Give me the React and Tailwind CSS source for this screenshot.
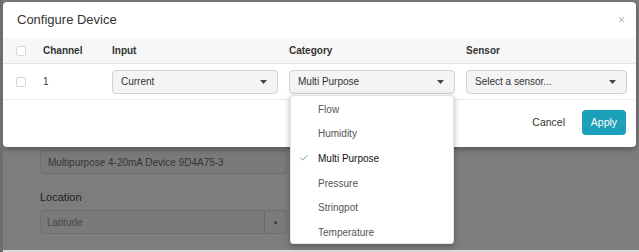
import { Check } from 'lucide-react'

const options = ['Flow', 'Humidity', 'Multi Purpose', 'Pressure', 'Stringpot', 'Temperature']

function Caret() {
  return (
    <svg width="7" height="4" viewBox="0 0 7 4" className="shrink-0">
      <path d="M0 0h7L3.5 4z" fill="#444" />
    </svg>
  )
}

function Select({ label, muted, className }) {
  return (
    <div className={`h-[24px] flex items-center justify-between rounded-[4px] border border-[#d2d2d2] bg-[#f4f4f5] pl-[8px] pr-[10px] text-[10px] ${muted ? 'text-[#555]' : 'text-[#333]'} ${className}`}>
      <span>{label}</span>
      <Caret />
    </div>
  )
}

function Box() {
  return <div className="w-[10px] h-[10px] rounded-[2px] border border-[#d6d6d6] bg-white" />
}

export default function App() {
  return (
    <div className="relative w-[639px] h-[252px] overflow-hidden bg-[#7d7d7d] border-l-[3px] border-[#6e6e6e] font-['Liberation_Sans',Arial,sans-serif]">
      {/* dimmed page behind the modal */}
      <div className="pl-[37px] pt-[150px] w-[284px]">
        <div className="h-[24px] flex items-center rounded-[4px] border border-[#6f6f6f] bg-[#7a7a7a] px-[7px] text-[10px] text-[#363636]">
          Multipurpose 4-20mA Device 9D4A75-3
        </div>
        <div className="mt-[17px] text-[11px] leading-[12px] text-[#222]">Location</div>
        <div className="mt-[7px] h-[24px] flex rounded-[4px] border border-[#6f6f6f] bg-[#7a7a7a] text-[10px] text-[#474747]">
          <div className="flex-1 flex items-center px-[6px]">Latitude</div>
          <div className="w-[22px] border-l border-[#6a6a6a] flex items-center justify-center">
            <div className="w-[3px] h-[3px] rounded-full bg-[#3a3a3a]" />
          </div>
        </div>
        <div className="mt-[16px] h-[20px] rounded-[4px] border border-[#6f6f6f]" />
      </div>
      <div className="absolute left-0 right-0 bottom-0 h-[2px] bg-[#dcdcdc]" />

      {/* modal */}
      <div className="absolute left-0 top-[2px] w-[633px] h-[145px] rounded-[4px] bg-white shadow-[0_2px_6px_rgba(0,0,0,0.35)]">
        <div className="h-[36px] flex items-center justify-between pl-[14px] pr-[11px]">
          <span className="text-[13px] text-[#333]">Configure Device</span>
          <span className="text-[12px] text-[#b5b5b5]">×</span>
        </div>
        <div className="h-[26px] flex items-center bg-[#f7f7f7] border-b border-[#e4e4e4] text-[10px] font-bold text-[#333]">
          <div className="w-[40px] pl-[13px]"><Box /></div>
          <div className="w-[69px]">Channel</div>
          <div className="w-[177px]">Input</div>
          <div className="w-[177px]">Category</div>
          <div>Sensor</div>
        </div>
        <div className="h-[36px] flex items-center border-b border-[#ececec] text-[10px] text-[#333]">
          <div className="w-[40px] pl-[13px]"><Box /></div>
          <div className="w-[69px]">1</div>
          <Select label="Current" className="w-[166px] mr-[11px]" />
          <Select label="Multi Purpose" className="w-[166px] mr-[11px]" />
          <Select label="Select a sensor..." className="w-[161px]" />
        </div>
        <div className="flex items-center justify-end gap-[17px] pr-[10px] pt-[10px]">
          <span className="text-[10.5px] text-[#333]">Cancel</span>
          <button className="h-[25px] w-[44px] rounded-[4px] bg-[#1aa0b8] text-[10.5px] text-white">Apply</button>
        </div>
      </div>

      {/* open category menu */}
      <div className="absolute left-[287px] top-[95px] w-[164px] h-[149px] rounded-[3px] bg-white py-[1px] shadow-[0_2px_6px_rgba(0,0,0,0.3)] border border-[#e2e2e2]">
        {options.map(o => (
          <div key={o} className="h-[24.6px] flex items-center text-[10px]">
            <div className="w-[27px] flex justify-end pr-[9px]">
              {o === 'Multi Purpose' && <Check size={10} strokeWidth={1.5} className="text-[#555]" />}
            </div>
            <span className={o === 'Multi Purpose' ? 'text-[#111]' : 'text-[#555]'}>{o}</span>
          </div>
        ))}
      </div>
    </div>
  )
}
